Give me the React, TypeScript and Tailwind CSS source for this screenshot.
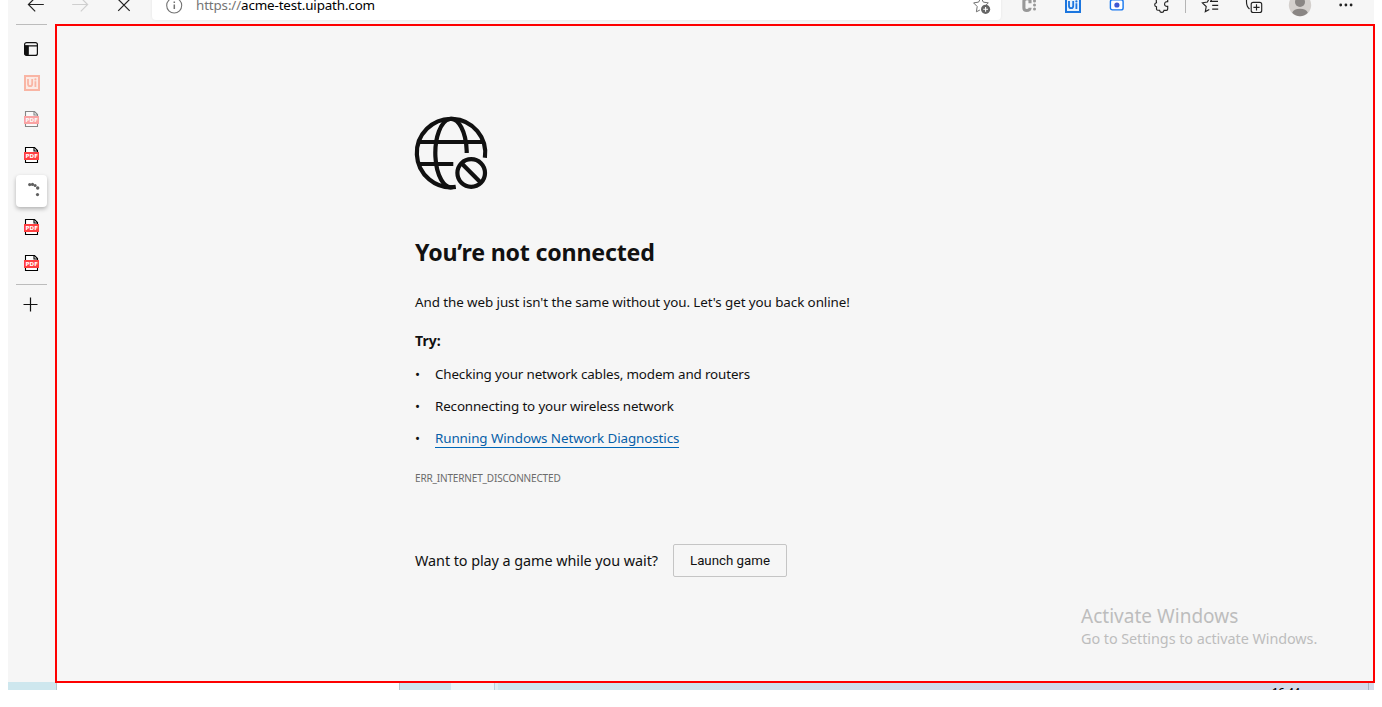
import type { ReactNode } from "react";

function PdfIcon({ faded = false }: { faded?: boolean }) {
  return (
    <svg width="16" height="18" viewBox="0 0 16 18" className={faded ? "opacity-45" : ""}>
      <path d="M1.5 1.5H10.5L13.5 4.5V16.5H1.5Z" fill="#fff" stroke="#000" strokeWidth="1.1" />
      <path d="M10 1.5V5H13.5" fill="none" stroke="#000" strokeWidth="1.1" />
      <rect x="0" y="6" width="15" height="8" fill="#ff4040" />
      <text x="1.6" y="12" fontSize="5.5" fontWeight="700" fontFamily="DejaVu Sans" fill="#fff">PDF</text>
    </svg>
  );
}

function UiIcon({ color, fill }: { color: string; fill: string }) {
  return (
    <svg width="16" height="16" viewBox="0 0 16 16" className="shrink-0">
      <rect x="1" y="1" width="14" height="14" fill={fill} stroke={color} strokeWidth="2" />
      <path d="M4 4v5q0 2.2 2.1 2.2T8.2 9V4M11.4 6.2v5.8" fill="none" stroke={color} strokeWidth="1.8" />
      <circle cx="11.4" cy="4.4" r="1.1" fill={color} />
    </svg>
  );
}

function SideItem({ children }: { children: ReactNode }) {
  return <div className="flex h-9 w-[31px] items-center justify-center">{children}</div>;
}

function Toolbar() {
  return (
    <header className="h-6 overflow-hidden bg-[#f6f6f6]">
      <div className="-mt-2.5 flex h-[30px] items-center">
        <svg className="ml-[19px] shrink-0" width="18" height="18" viewBox="0 0 18 18" fill="none" stroke="#222" strokeWidth="1.2">
          <path d="M16.8 8.5H1.4M8.2 1.7 1.4 8.5l6.8 6.8" />
        </svg>
        <svg className="ml-[26px] shrink-0" width="18" height="18" viewBox="0 0 18 18" fill="none" stroke="#cfcfcf" strokeWidth="1.2">
          <path d="M1.2 8.5h15.4M9.8 1.7l6.8 6.8-6.8 6.8" />
        </svg>
        <svg className="ml-[26px] shrink-0" width="18" height="18" viewBox="0 0 18 18" fill="none" stroke="#222" strokeWidth="1.2">
          <path d="m3.2 3.3 11.5 11.5M14.7 3.3 3.2 14.8" />
        </svg>
        <div className="ml-[19px] flex h-[30px] w-[849px] shrink-0 items-center rounded bg-white shadow-[0_0_3px_rgba(0,0,0,0.07)]">
          <svg className="ml-3.5 shrink-0" width="17" height="17" viewBox="0 0 17 17" fill="none" stroke="#737373" strokeWidth="1.1">
            <circle cx="8.2" cy="8.5" r="7.5" />
            <path d="M8.3 7.4v4.7M8.3 4.5v1.5" strokeWidth="1.5" />
          </svg>
          <div className="-mt-px ml-[13px] whitespace-nowrap font-['Noto_Sans',sans-serif] text-[13.4px] leading-[20px] tracking-[-0.14px] text-black">
            <span className="text-[#757575]">https://</span>acme-test.uipath.com
          </div>
          <svg className="mr-[10px] ml-auto shrink-0" width="20" height="20" viewBox="971 -5 20 20">
            <path d="m981-2.5 2.3 4.6 5 .8-3.6 3.5M981-2.5l-2.4 4.6-5 .8 3.6 3.6-.8 5.3 3.5-1.8" fill="none" stroke="#717171" />
            <circle cx="985.6" cy="9.3" r="4.6" fill="#666" />
            <path d="M983.2 9.3h4.8M985.6 6.9v4.8" stroke="#fff" strokeWidth="1.1" />
          </svg>
        </div>
        <svg className="ml-5 shrink-0" width="16" height="20" viewBox="1021 -5 16 20">
          <path d="M1030 3.2V.4q0-1.6-2.8-1.6T1023.9.9v7.2q0 2.4 2.9 2.4T1030 8.4V7.8" fill="none" stroke="#989898" strokeWidth="3.1" />
          <path d="M1034.5 1h.01M1034.5 5h.01M1034.5 9h.01" stroke="#989898" strokeWidth="3" strokeLinecap="round" />
        </svg>
        <div className="ml-7 shrink-0"><UiIcon color="#1c76df" fill="#e8f3fc" /></div>
        <svg className="ml-7 shrink-0" width="16" height="16" viewBox="0 0 16 16">
          <path d="M5.6 1.2h4.8" stroke="#1677ef" strokeWidth="1.3" />
          <rect x="1.4" y="2.7" width="12.7" height="10.2" rx="2" fill="#fff" stroke="#1677ef" strokeWidth="1.4" />
          <circle cx="7.9" cy="8" r="2.6" fill="#4058d2" />
        </svg>
        <svg className="ml-[27px] shrink-0" width="18" height="20" viewBox="1152 -5 18 20" fill="none" stroke="#222" strokeWidth="1.15">
          <path d="M1156.3 1.2V-1q0-1 1-1h2.2a2 2 0 0 1 4 0h3.2q1 0 1 1v2.6q-3-.2-3.1 2.4t3.1 2.4V9q0 1.3-1.3 1.3h-2.4q-.3 2.1-2.2 2.1t-2.2-2.1h-1.9q-1.2 0-1.2-1.2V6.7q-1.8-.3-1.8-2t1.8-2z" />
        </svg>
        <div className="ml-[15px] h-4 w-px shrink-0 bg-[#b5b5b5]" />
        <svg className="ml-[14px] shrink-0" width="20" height="20" viewBox="1200 -5 20 20" fill="none" stroke="#222" strokeWidth="1.15">
          <path d="m1211.8 1.5-2.1-4-2.3 4.5-5 .8 3.8 3.7-.9 5.1 4-2.1M1210 1.4h8M1212.2 5.4h6M1212.2 9.1h6" />
        </svg>
        <svg className="ml-6 shrink-0" width="20" height="20" viewBox="1244 -5 20 20" fill="none" stroke="#222" strokeWidth="1.15">
          <path d="M1246.5-1v3q0 4.5 3 7" />
          <path d="M1249-1h9" />
          <rect x="1251.2" y="2.3" width="10.5" height="10.2" rx="2" />
          <path d="M1253.4 7.4h6.2M1256.5 4.3v6.2" />
        </svg>
        <svg className="ml-6 shrink-0" width="24" height="24" viewBox="1288 -7 24 24">
          <circle cx="1300" cy="5" r="11.2" fill="#d4d0cd" />
          <circle cx="1300" cy="2" r="5" fill="#8a8684" />
          <path d="M1292.2 12.8q1.5-4.1 7.8-4.1t7.8 4.1q-3.2 3.4-7.8 3.4t-7.8-3.4" fill="#8a8684" />
        </svg>
        <svg className="ml-6 shrink-0" width="20" height="20" viewBox="1336 -5 20 20" fill="#222">
          <circle cx="1340.7" cy="5" r="1.4" /><circle cx="1345.9" cy="5" r="1.4" /><circle cx="1351.1" cy="5" r="1.4" />
        </svg>
      </div>
    </header>
  );
}

function Sidebar() {
  return (
    <aside className="w-[47px] shrink-0 bg-[#f6f6f6] pl-2">
      <div className="h-px w-[31px] bg-[#bcbcbc]" />
      <div className="flex h-12 w-[31px] items-center pl-[7px]">
        <svg width="16" height="16" viewBox="0 0 16 16" fill="none" stroke="#111" strokeWidth="1.2">
          <rect x="1.6" y="1.6" width="12.8" height="12.8" rx="2" />
          <path d="M2 4.8h12M5 4.8v9" /><path d="M2 5h3v9H3l-1-1z" fill="#111" />
        </svg>
      </div>
      <div className="-mt-2 flex h-9 w-[31px] items-center pl-2"><UiIcon color="#f9b5a4" fill="#fbeae5" /></div>
      <SideItem><PdfIcon faded /></SideItem>
      <SideItem><PdfIcon /></SideItem>
      <div className="my-0.5 h-8 w-[31px] rounded bg-white shadow-[0_2px_4px_rgba(0,0,0,0.28)]">
        <svg width="31" height="32" viewBox="0 0 31 32" fill="#606060">
          <circle cx="13.7" cy="9.6" r="1.6" /><circle cx="16.5" cy="9.4" r="1.6" /><circle cx="19.1" cy="10.6" r="1.5" /><circle cx="21.7" cy="13" r="1.7" /><circle cx="21.5" cy="19.6" r="1.6" />
        </svg>
      </div>
      <SideItem><PdfIcon /></SideItem>
      <SideItem><PdfIcon /></SideItem>
      <div className="mt-[3px] h-px w-[31px] bg-[#bcbcbc]" />
      <svg className="mt-3 ml-[7px]" width="16" height="16" viewBox="0 0 16 16" fill="none" stroke="#111" strokeWidth="1.2">
        <path d="M.5 7.5h14M7.5.5v14" />
      </svg>
    </aside>
  );
}

function OfflineGlobe() {
  return (
    <svg className="-ml-px" width="76" height="76" viewBox="0 0 76 76" fill="none" stroke="#111" strokeWidth="4.2">
      <path d="M70.9 41.8A34.2 34.2 0 1 0 41.8 70.9M5 26h64M5 48h34.3" />
      <path d="M52.7 36.9V35A15.7 34.2 0 1 0 39 71" />
      <circle cx="57.2" cy="57" r="13.8" fill="#f6f6f6" />
      <path d="m47.5 47.3 19.4 19.4" />
    </svg>
  );
}

export default function App() {
  return (
    <div className="h-[707px] w-[1382px] overflow-hidden bg-white pl-2 font-['Noto_Sans',sans-serif] text-[#111]">
      <div className="w-[1366px]"><Toolbar /></div>
      <div className="flex h-[659px] w-[1367px]">
        <Sidebar />
        <main className="relative flex w-[1320px] flex-col border-2 border-[#fe0000] bg-[#f6f6f6] pt-[90px] pl-[358px]">
          <OfflineGlobe />
          <h1 className="mt-11 text-[23.2px] leading-[32px] font-bold tracking-[-0.2px] whitespace-nowrap">You’re not connected</h1>
          <p className="mt-6 text-[13.4px] leading-5 tracking-[-0.08px] whitespace-nowrap">And the web just isn't the same without you. Let's get you back online!</p>
          <h2 className="mt-[19px] text-[14px] leading-5 font-bold">Try:</h2>
          <ul className="mt-[13px] text-[13.4px] leading-5 tracking-[-0.14px]">
            {["Checking your network cables, modem and routers", "Reconnecting to your wireless network"].map((tip) => (
              <li key={tip} className="mb-3 flex"><span className="w-5">•</span><span>{tip}</span></li>
            ))}
            <li className="flex"><span className="w-5">•</span><a className="h-5 border-b border-[#0067b8] tracking-[-0.09px] text-[#0760a8]">Running Windows Network Diagnostics</a></li>
          </ul>
          <div className="mt-5 text-[10px] leading-5 tracking-[-0.16px] text-[#6b6b6b]">ERR_INTERNET_DISCONNECTED</div>
          <div className="mt-14 flex h-[33px] items-center">
            <span className="w-[258px] text-[14.4px] leading-5 tracking-[-0.06px] whitespace-nowrap">Want to play a game while you wait?</span>
            <button className="h-[33px] w-[114px] rounded-[2px] border border-[#c5c5c5] font-['Roboto',sans-serif] text-[13.3px]">Launch game</button>
          </div>
          <div className="mt-[27px] ml-[666px] whitespace-nowrap text-[#bdbdbd]">
            <div className="text-[19px] leading-6 tracking-[0.02px]">Activate Windows</div>
            <div className="mt-px text-[14.4px] leading-5 tracking-[-0.06px]">Go to Settings to activate Windows.</div>
          </div>
        </main>
      </div>
      <footer className="-mt-px flex h-2 w-[1366px] bg-[linear-gradient(90deg,#cee7ee_0%,#cee7ee_40%,#d0d9ea_75%,#d5dbea_100%)]">
        <div className="h-2 w-12 bg-[#cee7ee]" />
        <div className="mt-px h-[7px] w-[344px] border-x border-[#b8c8ce] bg-white" />
        <div className="ml-[51px] h-2 w-11 border-r border-[#b9d0dc] bg-[#eaf5f8]" />
        <div className="h-2 w-[3px] bg-[#dceef3]" />
        <div className="ml-[774px] h-2 w-[96px] overflow-hidden text-[11px] leading-4 font-medium text-black"><div className="mt-0.5">16:44</div></div>
        <div className="mt-px h-[7px] w-px bg-[#aab3c2]" />
      </footer>
    </div>
  );
}
